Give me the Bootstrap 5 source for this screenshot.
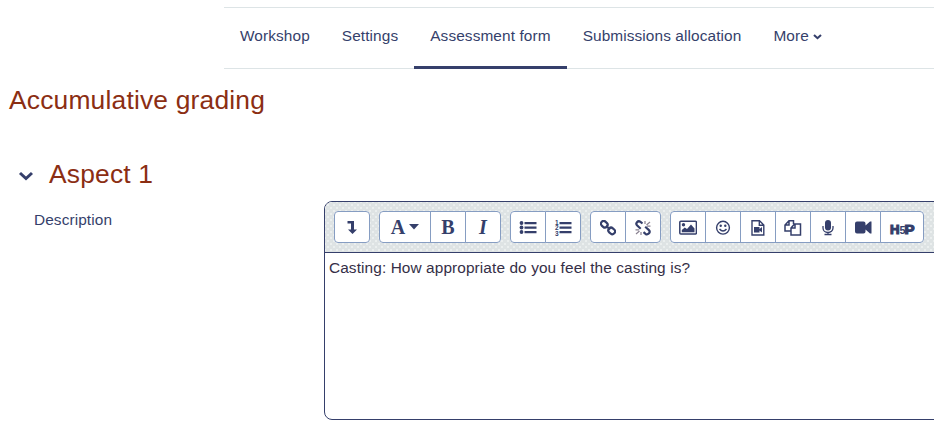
<!DOCTYPE html>
<html lang="en">
<head>
<meta charset="utf-8">
<meta name="viewport" content="width=device-width, initial-scale=1">
<title>Assessment form</title>
<link href="https://cdn.jsdelivr.net/npm/bootstrap@5.3.0/dist/css/bootstrap.min.css" rel="stylesheet">
<style>
:root { --navy: #353f6b; --rust: #8b2e13; --line: #dde4e6; --btnline: #869dc2; }
body { font-family: "Liberation Sans", Arial, sans-serif; font-size: 15.4px; letter-spacing: .1px; color: var(--navy); background: #fff; height: 425px; overflow: hidden; }
.tabs { margin: 7px 0 0 224px; height: 62px; border-top: 1px solid var(--line); border-bottom: 1px solid var(--line); }
.tabs .nav-link { color: var(--navy); padding: 0 16px; height: 61px; line-height: 56px; border-bottom: 3px solid transparent; white-space: nowrap; }
.tabs .nav-link.active { border-bottom-color: var(--navy); }
.title { color: var(--rust); font-size: 26.4px; letter-spacing: .19px; line-height: 32px; font-weight: 400; margin: 0; }
.page-title { padding: 15px 0 0 9px; }
.aspect { padding: 42px 0 0 18px; }
.aspect svg { width: 16px; margin: 4px 15px 0 0; }
.desc { width: 324px; padding: 7px 0 0 34px; }
.editor { width: 640px; height: 219px; border: 1px solid var(--navy); border-radius: 8px; overflow: hidden; }
.tools { height: 51px; padding: 9px; gap: 9px; border-bottom: 1px solid var(--navy); background-color: #dee3e4; background-image: radial-gradient(circle, #f3f6f6 .6px, transparent .9px), radial-gradient(circle, #f3f6f6 .6px, transparent .9px); background-size: 6px 6px; background-position: 0 0, 3px 3px; letter-spacing: 0; }
.tools .btn-group { height: 32px; background: #fff; border-radius: 4px; }
.tools .btn { flex: none; width: 36px; padding: 0; background: #fff; border: 1px solid var(--btnline); border-radius: 4px; color: var(--navy); line-height: 30px; }
.tools .btn.wide { width: 52px; }
.tools .btn.h5p { width: 44px; }
.tools svg, .aspect svg, .tabs svg { display: inline-block; fill: currentColor; }
.tools .serif { font: bold 20px/29px "Liberation Serif", serif; }
.num { font: bold 6.5px "Liberation Sans", sans-serif; }
.logo { font: 900 13px "Liberation Sans", sans-serif; stroke: currentColor; stroke-width: 1.2px; }
.logo-mid { font: bold 10px "Liberation Sans", sans-serif; }
.content-text { padding: 5px 4px; line-height: 19px; color: #352f47; }
</style>
<script src="https://cdn.jsdelivr.net/npm/bootstrap@5.3.0/dist/js/bootstrap.bundle.min.js"></script>
</head>
<body>
<nav class="tabs nav flex-nowrap">
  <a class="nav-link" href="#">Workshop</a>
  <a class="nav-link" href="#">Settings</a>
  <a class="nav-link active" href="#">Assessment form</a>
  <a class="nav-link" href="#">Submissions allocation</a>
  <a class="nav-link" href="#">More <svg width="9" height="6" viewBox="0 0 9 6"><path d="M1 1l3.500 3.200L8 1" fill="none" stroke="currentColor" stroke-width="2.100"/></svg></a>
</nav>
<main>
  <h2 class="title page-title">Accumulative grading</h2>
  <div class="aspect d-flex align-items-center">
    <svg height="10" viewBox="0 0 16 10" color="#353f6b"><path d="M2 2l6 5.500L14 2" fill="none" stroke="currentColor" stroke-width="3"/></svg>
    <h3 class="title">Aspect 1</h3>
  </div>
  <div class="d-flex" style="padding-top:11px">
    <label class="desc flex-shrink-0">Description</label>
    <div class="editor flex-shrink-0">
      <div class="tools d-flex">
        <div class="btn-group"><button class="btn" aria-label="Show more"><svg width="16" height="16" viewBox="0 0 16 16"><path d="M3.500 1h6.500v8.500h3L8.500 14 4 9.500h3V3.500H3.500z"/></svg></button></div>
        <div class="btn-group"><button class="btn wide serif">A<svg width="10" height="6" viewBox="0 0 10 6" class="ms-1 mb-1"><path d="M0 0h10L5 5.500z"/></svg></button><button class="btn serif">B</button><button class="btn serif fst-italic">I</button></div>
        <div class="btn-group">
          <button class="btn" aria-label="Bullets"><svg width="18" height="16" viewBox="0 0 18 16"><circle cx="2.500" cy="3" r="1.900"/><circle cx="2.500" cy="7.500" r="1.900"/><circle cx="2.500" cy="12" r="1.900"/><path d="M5.500 2h12v2.200H5.500zM5.500 6.500h12v2.200H5.500zM5.500 11h12v2.200H5.500z"/></svg></button>
          <button class="btn" aria-label="Numbers"><svg width="18" height="16" viewBox="0 0 18 16"><path d="M5.500 2h12v2.200H5.500zM5.500 6.500h12v2.200H5.500zM5.500 11h12v2.200H5.500z"/><text class="num" x="1" y="4.600">1</text><text class="num" x="1" y="10">2</text><text class="num" x="1" y="15.500">3</text></svg></button>
        </div>
        <div class="btn-group">
          <button class="btn" aria-label="Link"><svg width="16" height="16" viewBox="0 0 16 16"><g fill="none" stroke="currentColor" stroke-width="2.200" transform="rotate(42 8 8)"><rect x="-.8" y="5" width="7" height="5.400" rx="2.600"/><rect x="9.200" y="5" width="7" height="5.400" rx="2.600"/><path d="M5 7.700h5.500"/></g></svg></button>
          <button class="btn" aria-label="Unlink"><svg width="16" height="16" viewBox="0 0 16 16"><g fill="none" stroke="currentColor" stroke-width="2.200"><path d="M7.500 3.500L5.500 1.800Q3.500 .5 2 2.200T2.200 5.500l3.500 3.200M8.500 12.200l2 1.700q2 1 3.500-.7t-.3-3.300L10.200 6.800"/><path d="M10 1v3M11.500 5l3.500-3M12 6.200h3.500M6 15v-3M4.500 11l-3.500 3M4 9.800H.5" stroke="#8a8291" stroke-width="1.200"/></g></svg></button>
        </div>
        <div class="btn-group">
          <button class="btn" aria-label="Image"><svg width="18" height="16" viewBox="0 0 18 16"><rect x=".8" y="1.300" width="16.600" height="12.700" rx="1" fill="none" stroke="currentColor" stroke-width="1.500"/><circle cx="4.500" cy="4.700" r="1.700"/><path d="M2.800 12.200V10l3-2.500 2.200 1.500 4-4.500 3.500 4v3.700z"/></svg></button>
          <button class="btn" aria-label="Emoji"><svg width="16" height="16" viewBox="0 0 16 16"><circle cx="8" cy="7.700" r="6.400" fill="none" stroke="currentColor" stroke-width="1.400"/><circle cx="5.700" cy="5.700" r="1.200"/><circle cx="10.300" cy="5.700" r="1.200"/><path d="M4.500 9Q8 13 11.500 9" fill="none" stroke="currentColor" stroke-width="1.400"/></svg></button>
          <button class="btn" aria-label="Media"><svg width="16" height="16" viewBox="0 0 16 16"><path d="M2 .7h7.500l4.300 4.300v10H2zM9.300 1v4.300H14" fill="none" stroke="currentColor" stroke-width="1.400"/><path d="M4 7h5.500v2l2.500-2v5.500l-2.500-2v2H4z"/></svg></button>
          <button class="btn" aria-label="Files"><svg width="18" height="16" viewBox="0 0 18 16"><path d="M6.500 11H1V5l4-4.200h4.500V4M1 5h4V1M7 8l3.500-4H16.500v11H7zM7 8h4V4" fill="none" stroke="currentColor" stroke-width="1.500"/></svg></button>
          <button class="btn" aria-label="Record audio"><svg width="16" height="16" viewBox="0 0 16 16"><rect x="5" y="0" width="6" height="10.500" rx="3"/><path d="M3 6v2a5 4.500 0 0 0 10 0V6M8 12.500v2M4.500 14.500h7" fill="none" stroke="currentColor" stroke-width="1.300"/></svg></button>
          <button class="btn" aria-label="Record video"><svg width="18" height="16" viewBox="0 0 18 16"><path d="M3 1.500h6.500q2 0 2 2v2l4.500-4h1.500v12h-1.500l-4.500-4v2q0 2-2 2H3q-2 0-2-2v-8q0-2 2-2z"/></svg></button>
          <button class="btn h5p" aria-label="H5P"><svg width="26" height="20" viewBox="0 0 26 20"><text class="logo" x="1" y="15.500" textLength="9.500" lengthAdjust="spacingAndGlyphs">H</text><text class="logo-mid" x="10.500" y="15.500" textLength="6" lengthAdjust="spacingAndGlyphs">5</text><text class="logo" x="15.500" y="15.500" textLength="10" lengthAdjust="spacingAndGlyphs">P</text></svg></button>
        </div>
      </div>
      <div class="content-text">Casting: How appropriate do you feel the casting is?</div>
    </div>
  </div>
</main>
</body>
</html>
